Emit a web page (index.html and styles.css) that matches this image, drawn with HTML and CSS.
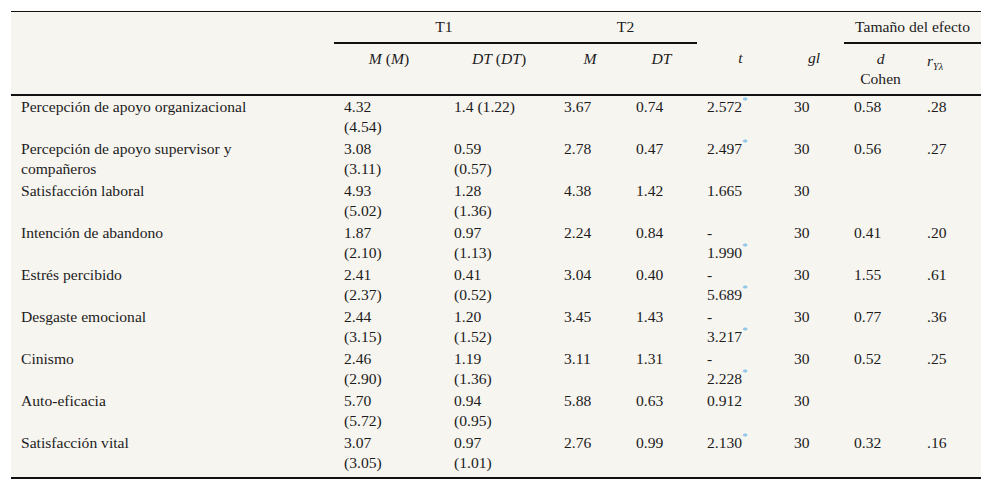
FILE: index.html
```html
<!DOCTYPE html>
<html lang="es">
<head>
<meta charset="utf-8">
<title>Tabla</title>
<link rel="stylesheet" href="styles.css">
</head>
<body>
<table class="tbl">
  <colgroup>
    <col class="c-var"><col class="c-m1"><col class="c-dt1"><col class="c-m2"><col class="c-dt2"><col class="c-t"><col class="c-gl"><col class="c-d"><col class="c-r">
  </colgroup>
  <thead>
    <tr class="h1">
      <th></th>
      <th colspan="2" class="grp">T1</th>
      <th colspan="2" class="grp">T2</th>
      <th></th>
      <th></th>
      <th colspan="2" class="grp">Tamaño del efecto</th>
    </tr>
    <tr class="h2">
      <th></th>
      <th><i>M</i> (<i>M</i>)</th>
      <th><i>DT</i> (<i>DT</i>)</th>
      <th><i>M</i></th>
      <th><i>DT</i></th>
      <th><i>t</i></th>
      <th><i>gl</i></th>
      <th><i>d</i><br>Cohen</th>
      <th class="rcol"><i>r</i><sub><i>Yλ</i></sub></th>
    </tr>
  </thead>
  <tbody>
    <tr>
      <td>Percepción de apoyo organizacional</td>
      <td>4.32<br>(4.54)</td><td>1.4 (1.22)</td><td>3.67</td><td>0.74</td>
      <td>2.572<sup class="ast">*</sup></td><td>30</td><td>0.58</td><td>.28</td>
    </tr>
    <tr>
      <td>Percepción de apoyo supervisor y<br>compañeros</td>
      <td>3.08<br>(3.11)</td><td>0.59<br>(0.57)</td><td>2.78</td><td>0.47</td>
      <td>2.497<sup class="ast">*</sup></td><td>30</td><td>0.56</td><td>.27</td>
    </tr>
    <tr>
      <td>Satisfacción laboral</td>
      <td>4.93<br>(5.02)</td><td>1.28<br>(1.36)</td><td>4.38</td><td>1.42</td>
      <td>1.665</td><td>30</td><td></td><td></td>
    </tr>
    <tr>
      <td>Intención de abandono</td>
      <td>1.87<br>(2.10)</td><td>0.97<br>(1.13)</td><td>2.24</td><td>0.84</td>
      <td>-<br>1.990<sup class="ast">*</sup></td><td>30</td><td>0.41</td><td>.20</td>
    </tr>
    <tr>
      <td>Estrés percibido</td>
      <td>2.41<br>(2.37)</td><td>0.41<br>(0.52)</td><td>3.04</td><td>0.40</td>
      <td>-<br>5.689<sup class="ast">*</sup></td><td>30</td><td>1.55</td><td>.61</td>
    </tr>
    <tr>
      <td>Desgaste emocional</td>
      <td>2.44<br>(3.15)</td><td>1.20<br>(1.52)</td><td>3.45</td><td>1.43</td>
      <td>-<br>3.217<sup class="ast">*</sup></td><td>30</td><td>0.77</td><td>.36</td>
    </tr>
    <tr>
      <td>Cinismo</td>
      <td>2.46<br>(2.90)</td><td>1.19<br>(1.36)</td><td>3.11</td><td>1.31</td>
      <td>-<br>2.228<sup class="ast">*</sup></td><td>30</td><td>0.52</td><td>.25</td>
    </tr>
    <tr>
      <td>Auto-eficacia</td>
      <td>5.70<br>(5.72)</td><td>0.94<br>(0.95)</td><td>5.88</td><td>0.63</td>
      <td>0.912</td><td>30</td><td></td><td></td>
    </tr>
    <tr>
      <td>Satisfacción vital</td>
      <td>3.07<br>(3.05)</td><td>0.97<br>(1.01)</td><td>2.76</td><td>0.99</td>
      <td>2.130<sup class="ast">*</sup></td><td>30</td><td>0.32</td><td>.16</td>
    </tr>
  </tbody>
</table>
</body>
</html>
```
FILE: styles.css
```css
html, body {
  margin: 0;
  padding: 0;
  background: #ffffff;
}
body {
  padding: 11px 11px 0 11px;
  font-family: "Liberation Serif", "Times New Roman", serif;
  font-size: 15.6px;
  line-height: 20px;
  color: #1c1c1c;
}
.tbl {
  width: 970px;
  table-layout: fixed;
  border-collapse: collapse;
  background: #f7f5f0;
  border-top: 1px solid #111;
  border-bottom: 2px solid #111;
}
.c-var { width: 323px; }
.c-m1 { width: 110px; }
.c-dt1 { width: 110px; }
.c-m2 { width: 72px; }
.c-dt2 { width: 71px; }
.c-t { width: 87px; }
.c-gl { width: 60px; }
.c-d { width: 73px; }
.c-r { width: 64px; }

.tbl th {
  font-weight: normal;
  text-align: center;
  vertical-align: top;
  padding: 5px 10px;
}
.tbl th.grp {
  border-bottom: 2px solid #111;
}
.tbl thead tr.h2 th {
  border-bottom: 2px solid #111;
}
.tbl th.rcol {
  text-align: left;
  padding-top: 7px;
}
.tbl sub {
  font-size: 10px;
  line-height: 0;
  vertical-align: -4px;
}
.tbl td {
  text-align: left;
  vertical-align: top;
  padding: 1px 10px;
  white-space: nowrap;
}
.tbl sup.ast {
  color: #5fb4e4;
  font-size: 11px;
  line-height: 0;
  vertical-align: 8px;
}
.tbl tbody tr:last-child td {
  padding-bottom: 4px;
}
```
